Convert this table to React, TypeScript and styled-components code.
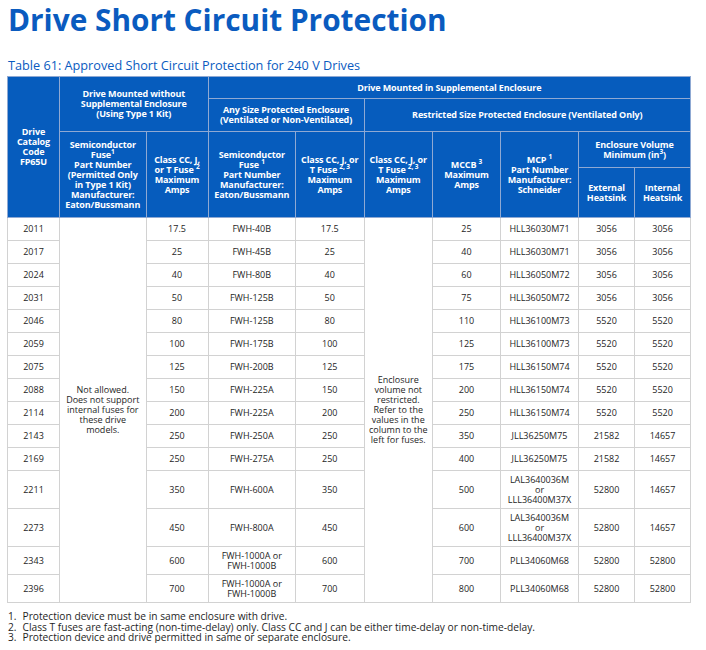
import React from "react";
import styled, { createGlobalStyle } from "styled-components";

const Global = createGlobalStyle`
  html, body { margin: 0; padding: 0; background: #ffffff; }
  body { font-family: "Open Sans", "Noto Sans", sans-serif; }
`;

const Page = styled.div`
  padding: 0 0 0 7px;
  width: 699px;
  box-sizing: border-box;
`;

const Title = styled.h1`
  margin: 0;
  font-family: "Open Sans", sans-serif;
  font-weight: 700;
  font-size: 29.8px;
  line-height: 40px;
  color: #0a5bbf;
  padding-left: 1px;
`;

const Caption = styled.div`
  margin: 16px 0 2px 0;
  font-family: "Open Sans", sans-serif;
  font-size: 12.7px;
  line-height: 18px;
  color: #0a5bbf;
  padding-left: 1px;
`;

const Table = styled.table`
  border-collapse: collapse;
  table-layout: fixed;
  width: 684px;
  border: 1px solid #c9c9c9;
`;

const HeadCell = styled.th`
  background: #065cbd;
  color: #ffffff;
  font-family: "Open Sans", sans-serif;
  font-weight: 700;
  font-size: 9px;
  line-height: 10px;
  letter-spacing: -0.12px;
  text-align: center;
  vertical-align: middle;
  padding: 2px 2px;
  border: 1px solid #8fa9d3;
`;

const HeadRow = styled.tr<{ $h: number }>`
  height: ${(p) => p.$h}px;
`;

const Cell = styled.td`
  font-family: "Open Sans", sans-serif;
  font-size: 9px;
  line-height: 10px;
  color: #1e1e1e;
  text-align: center;
  vertical-align: middle;
  padding: 3.5px 3px;
  border: 1px solid #d2d2d2;
  height: 15px;
`;

const NoteCell = styled(Cell)`
  padding: 4px 4px;
`;

const Sup = styled.sup`
  font-size: 6.5px;
  line-height: 0;
  vertical-align: baseline;
  position: relative;
  top: -3.5px;
`;

const Notes = styled.ol`
  margin: 8px 0 0 0;
  padding: 0;
  list-style: none;
  font-family: "Open Sans", sans-serif;
  font-size: 10.2px;
  line-height: 10.7px;
  color: #1e1e1e;
`;

const Note = styled.li`
  display: flex;
  gap: 6px;
  padding-left: 1px;
`;

const widths = [52, 86.5, 62, 87.5, 68.5, 68.5, 68, 78, 56, 56];

type Row = {
  code: string;
  a: string;
  fuse: React.ReactNode;
  b: string;
  mccb: string;
  mcp: React.ReactNode;
  ext: string;
  int: string;
};

const rows: Row[] = [
  { code: "2011", a: "17.5", fuse: "FWH-40B", b: "17.5", mccb: "25", mcp: "HLL36030M71", ext: "3056", int: "3056" },
  { code: "2017", a: "25", fuse: "FWH-45B", b: "25", mccb: "40", mcp: "HLL36030M71", ext: "3056", int: "3056" },
  { code: "2024", a: "40", fuse: "FWH-80B", b: "40", mccb: "60", mcp: "HLL36050M72", ext: "3056", int: "3056" },
  { code: "2031", a: "50", fuse: "FWH-125B", b: "50", mccb: "75", mcp: "HLL36050M72", ext: "3056", int: "3056" },
  { code: "2046", a: "80", fuse: "FWH-125B", b: "80", mccb: "110", mcp: "HLL36100M73", ext: "5520", int: "5520" },
  { code: "2059", a: "100", fuse: "FWH-175B", b: "100", mccb: "125", mcp: "HLL36100M73", ext: "5520", int: "5520" },
  { code: "2075", a: "125", fuse: "FWH-200B", b: "125", mccb: "175", mcp: "HLL36150M74", ext: "5520", int: "5520" },
  { code: "2088", a: "150", fuse: "FWH-225A", b: "150", mccb: "200", mcp: "HLL36150M74", ext: "5520", int: "5520" },
  { code: "2114", a: "200", fuse: "FWH-225A", b: "200", mccb: "250", mcp: "HLL36150M74", ext: "5520", int: "5520" },
  { code: "2143", a: "250", fuse: "FWH-250A", b: "250", mccb: "350", mcp: "JLL36250M75", ext: "21582", int: "14657" },
  { code: "2169", a: "250", fuse: "FWH-275A", b: "250", mccb: "400", mcp: "JLL36250M75", ext: "21582", int: "14657" },
  {
    code: "2211", a: "350", fuse: "FWH-600A", b: "350", mccb: "500",
    mcp: (<>LAL3640036M<br />or<br />LLL36400M37X</>), ext: "52800", int: "14657",
  },
  {
    code: "2273", a: "450", fuse: "FWH-800A", b: "450", mccb: "600",
    mcp: (<>LAL3640036M<br />or<br />LLL36400M37X</>), ext: "52800", int: "14657",
  },
  {
    code: "2343", a: "600", fuse: (<>FWH-1000A or<br />FWH-1000B</>), b: "600", mccb: "700",
    mcp: "PLL34060M68", ext: "52800", int: "52800",
  },
  {
    code: "2396", a: "700", fuse: (<>FWH-1000A or<br />FWH-1000B</>), b: "700", mccb: "800",
    mcp: "PLL34060M68", ext: "52800", int: "52800",
  },
];

export default function App() {
  return (
    <Page>
      <Global />
      <Title>Drive Short Circuit Protection</Title>
      <Caption>Table 61: Approved Short Circuit Protection for 240 V Drives</Caption>
      <Table>
        <colgroup>
          {widths.map((w, i) => (
            <col key={i} style={{ width: w }} />
          ))}
        </colgroup>
        <thead>
          <HeadRow $h={22}>
            <HeadCell rowSpan={4}>
              Drive<br />Catalog<br />Code<br />FP65U
            </HeadCell>
            <HeadCell colSpan={2} rowSpan={2}>
              Drive Mounted without<br />Supplemental Enclosure<br />(Using Type 1 Kit)
            </HeadCell>
            <HeadCell colSpan={7}>Drive Mounted in Supplemental Enclosure</HeadCell>
          </HeadRow>
          <HeadRow $h={33}>
            <HeadCell colSpan={2}>
              Any Size Protected Enclosure<br />(Ventilated or Non-Ventilated)
            </HeadCell>
            <HeadCell colSpan={5}>Restricted Size Protected Enclosure (Ventilated Only)</HeadCell>
          </HeadRow>
          <HeadRow $h={36}>
            <HeadCell rowSpan={2}>
              Semiconductor<br />Fuse<Sup>1</Sup><br />Part Number<br />(Permitted Only<br />in Type 1 Kit)<br />Manufacturer:<br />Eaton/Bussmann
            </HeadCell>
            <HeadCell rowSpan={2}>
              Class CC, J,<br />or T Fuse <Sup>2</Sup><br />Maximum<br />Amps
            </HeadCell>
            <HeadCell rowSpan={2}>
              Semiconductor<br />Fuse <Sup>1</Sup><br />Part Number<br />Manufacturer:<br />Eaton/Bussmann
            </HeadCell>
            <HeadCell rowSpan={2}>
              Class CC, J, or<br />T Fuse <Sup>2, 3</Sup><br />Maximum<br />Amps
            </HeadCell>
            <HeadCell rowSpan={2}>
              Class CC, J, or<br />T Fuse <Sup>2, 3</Sup><br />Maximum<br />Amps
            </HeadCell>
            <HeadCell rowSpan={2}>
              MCCB <Sup>3</Sup><br />Maximum<br />Amps
            </HeadCell>
            <HeadCell rowSpan={2}>
              MCP <Sup>1</Sup><br />Part Number<br />Manufacturer:<br />Schneider
            </HeadCell>
            <HeadCell colSpan={2}>
              Enclosure Volume<br />Minimum (in<Sup>3</Sup>)
            </HeadCell>
          </HeadRow>
          <HeadRow $h={50}>
            <HeadCell>External<br />Heatsink</HeadCell>
            <HeadCell>Internal<br />Heatsink</HeadCell>
          </HeadRow>
        </thead>
        <tbody>
          {rows.map((r, i) => (
            <tr key={r.code}>
              <Cell>{r.code}</Cell>
              {i === 0 && (
                <NoteCell rowSpan={rows.length}>
                  Not allowed.<br />Does not support<br />internal fuses for<br />these drive<br />models.
                </NoteCell>
              )}
              <Cell>{r.a}</Cell>
              <Cell>{r.fuse}</Cell>
              <Cell>{r.b}</Cell>
              {i === 0 && (
                <NoteCell rowSpan={rows.length}>
                  Enclosure<br />volume not<br />restricted.<br />Refer to the<br />values in the<br />column to the<br />left for fuses.
                </NoteCell>
              )}
              <Cell>{r.mccb}</Cell>
              <Cell>{r.mcp}</Cell>
              <Cell>{r.ext}</Cell>
              <Cell>{r.int}</Cell>
            </tr>
          ))}
        </tbody>
      </Table>
      <Notes>
        <Note><span>1.</span><span>Protection device must be in same enclosure with drive.</span></Note>
        <Note><span>2.</span><span>Class T fuses are fast-acting (non-time-delay) only. Class CC and J can be either time-delay or non-time-delay.</span></Note>
        <Note><span>3.</span><span>Protection device and drive permitted in same or separate enclosure.</span></Note>
      </Notes>
    </Page>
  );
}
